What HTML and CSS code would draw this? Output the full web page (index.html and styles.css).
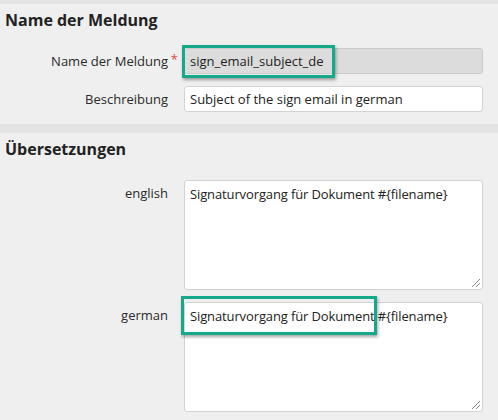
FILE: index.html
```html
<!DOCTYPE html>
<html lang="de">
<head>
<meta charset="utf-8">
<link rel="stylesheet" href="styles.css">
</head>
<body>
<div class="strip"></div>
<section class="section">
  <h2 class="title">Name der Meldung</h2>
  <div class="form">
    <label class="label">Name der Meldung<span class="req">*</span></label>
    <div class="field">
      <div class="input readonly">sign_email_subject_de</div>
      <div class="mark mark-name"></div>
    </div>
    <label class="label">Beschreibung</label>
    <div class="field">
      <div class="input">Subject of the sign email in german</div>
    </div>
  </div>
</section>
<div class="band"></div>
<section class="section">
  <h2 class="title">Übersetzungen</h2>
  <div class="form form-tr">
    <label class="label label-top">english</label>
    <div class="field">
      <div class="textarea">Signaturvorgang für Dokument #{filename}<span class="grip"></span></div>
    </div>
    <label class="label label-top">german</label>
    <div class="field">
      <div class="textarea">Signaturvorgang für Dokument #{filename}<span class="grip"></span></div>
      <div class="mark mark-de"></div>
    </div>
  </div>
</section>
</body>
</html>
```

FILE: styles.css
```css
html, body {
  margin: 0;
  padding: 0;
  background: #efefef;
  font-family: "Open Sans", "Noto Sans", sans-serif;
  color: #333;
}
body {
  width: 498px;
  height: 420px;
  overflow: hidden;
}
.strip {
  height: 4px;
  background: #e4e4e4;
}
.band {
  height: 9px;
  background: #e3e3e3;
  margin-top: 12px;
}
.section {
  padding: 0 15px 0 5px;
}
.title {
  margin: 0;
  padding-top: 4px;
  font-size: 16px;
  line-height: 24px;
  font-weight: 700;
  color: #222;
}
.form {
  display: grid;
  grid-template-columns: 163px 299px;
  column-gap: 16px;
  row-gap: 12px;
  margin-top: 16px;
}
.form-tr {
  margin-top: 19px;
}
.label {
  font-size: 13px;
  line-height: 26px;
  text-align: right;
  color: #2a2a2a;
  position: relative;
}
.label-top {
  line-height: 26px;
}
.req {
  color: #e0453a;
  position: absolute;
  right: -10px;
  top: -2px;
}
.field {
  position: relative;
}
.input {
  box-sizing: border-box;
  height: 26px;
  border: 1px solid #d2d2d2;
  border-radius: 3px;
  background: #fff;
  padding: 0 5px;
  font-size: 13px;
  line-height: 24px;
  color: #222;
}
.readonly {
  background: #dcdcdc;
  border-color: #cacaca;
}
.textarea {
  position: relative;
  box-sizing: border-box;
  height: 110px;
  border: 1px solid #d2d2d2;
  border-radius: 3px;
  background: #fff;
  padding: 4px 5px;
  font-size: 13px;
  line-height: 18px;
  letter-spacing: -0.12px;
  color: #222;
}
.grip {
  position: absolute;
  right: 2px;
  bottom: 2px;
  width: 10px;
  height: 10px;
  background: repeating-linear-gradient(135deg, transparent 0 2px, #8a8a8a 2px 3px);
  clip-path: polygon(100% 0, 100% 100%, 0 100%);
}
.mark {
  position: absolute;
  border: 3px solid #14a98a;
  box-shadow: 1px 2px 3px rgba(0,0,0,0.35);
  pointer-events: none;
}
.mark-name {
  left: -2px;
  top: -3px;
  width: 147px;
  height: 27px;
}
.mark-de {
  left: -3px;
  top: -6px;
  width: 190px;
  height: 33px;
}
```
